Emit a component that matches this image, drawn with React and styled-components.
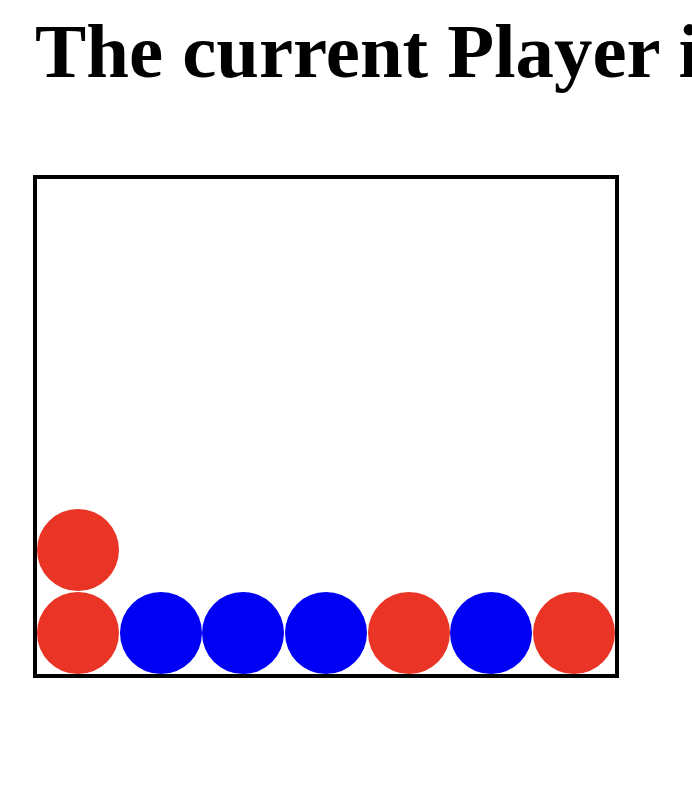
import React from "react";
import styled, { createGlobalStyle } from "styled-components";

const Global = createGlobalStyle`
  html, body { margin: 0; padding: 0; background: #fff; }
  body { font-family: "Liberation Serif", "Times New Roman", serif; }
`;

const Page = styled.div`
  padding: 14px 0 0 33px;
  overflow: hidden;
  width: 692px;
  box-sizing: border-box;
`;

const Title = styled.h1`
  margin: 0 0 0 2px;
  font-family: "Liberation Serif", "Times New Roman", serif;
  font-weight: 700;
  font-size: 76.8px;
  line-height: 1;
  white-space: nowrap;
  color: #000;
`;

const Board = styled.div`
  margin-top: 84px;
  width: max-content;
  border: 4px solid #000;
  display: grid;
  grid-template-columns: repeat(7, 82.6px);
  grid-template-rows: repeat(6, 82.6px);
  background: #fff;
`;

const Cell = styled.div`
  display: flex;
  align-items: center;
  justify-content: center;
`;

const Disc = styled.div`
  width: 82px;
  height: 82px;
  border-radius: 50%;
  background: ${(p) => (p.$player === "R" ? "#ea3526" : p.$player === "B" ? "#0000f5" : "transparent")};
`;

const grid = [
  ".......",
  ".......",
  ".......",
  ".......",
  "R......",
  "RBBBRBR",
];

export default function App() {
  return (
    <>
      <Global />
      <Page>
        <Title>The current Player is: Red</Title>
        <Board>
          {grid.flatMap((row, r) =>
            row.split("").map((c, i) => (
              <Cell key={`${r}-${i}`}>
                {c !== "." && <Disc $player={c} />}
              </Cell>
            ))
          )}
        </Board>
      </Page>
    </>
  );
}
